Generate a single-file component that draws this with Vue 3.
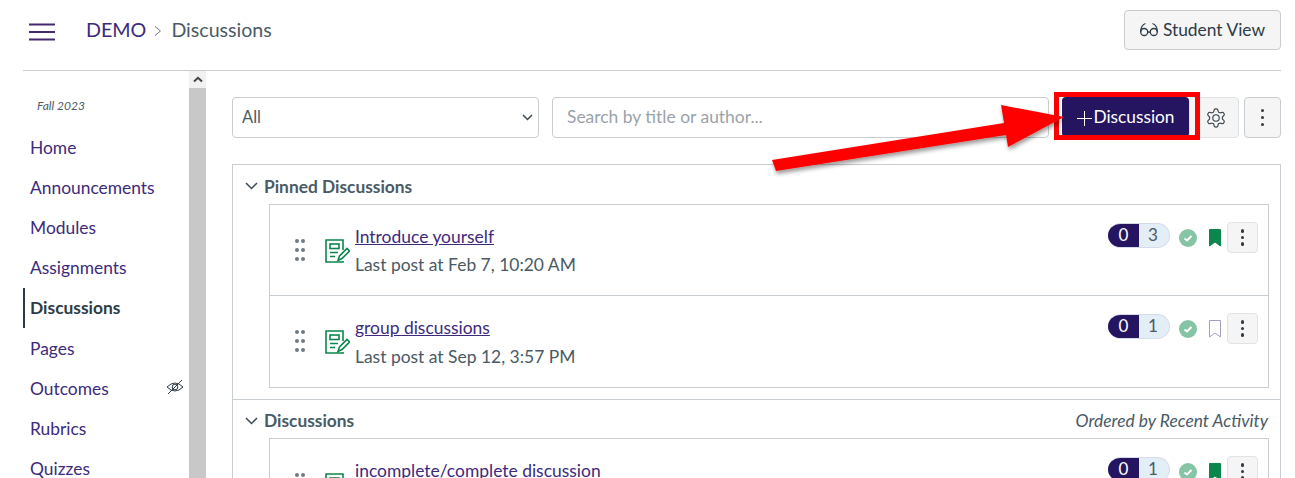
<script setup>
const nav = ['Home', 'Announcements', 'Modules', 'Assignments', 'Discussions', 'Pages', 'Outcomes', 'Rubrics', 'Quizzes']
const pinned = [
  { title: 'Introduce yourself', meta: 'Last post at Feb 7, 10:20 AM', count: 3, saved: true },
  { title: 'group discussions', meta: 'Last post at Sep 12, 3:57 PM', count: 1, saved: false }
]
</script>

<template>
  <div class="page">
    <header class="top">
      <svg class="burger" width="26" height="18" viewBox="0 0 26 18"><path d="M0 1.500h26M0 9h26M0 16.500h26" stroke="#46296f" stroke-width="2"/></svg>
      <a class="crumb">DEMO</a>
      <svg class="sep" width="8" height="12" viewBox="0 0 8 12"><path d="M1 1.500 6.500 6 1 10.500" fill="none" stroke="#6f7a82" stroke-width="1"/></svg>
      <span class="crumb-now">Discussions</span>
      <button class="btn student">
        <svg width="18" height="15" viewBox="0 0 18 15" fill="none" stroke="#2d3b45" stroke-width="1.300"><circle cx="4.200" cy="10" r="3.500"/><circle cx="13.800" cy="10" r="3.500"/><path d="M7.700 10.500q1.300-1.200 2.600 0M.7 10C.7 6 2.500 2.500 5.500 1.500M17.300 10C17.300 6 15.500 2.500 12.500 1.500"/></svg>
        <span>Student View</span>
      </button>
    </header>
    <div class="body">
      <aside class="side">
        <div class="term">Fall 2023</div>
        <ul class="nav">
          <li v-for="n in nav" :key="n" :class="{ active: n === 'Discussions' }">
            <span>{{ n }}</span>
            <svg v-if="n === 'Outcomes'" class="eye" width="18" height="16" viewBox="0 0 18 16" fill="none" stroke="#2d3b45" stroke-width="1"><path d="M1 8q8-8 16 0q-8 8-16 0Z"/><circle cx="9" cy="8" r="2.800"/><path d="M2 15 16 1"/></svg>
          </li>
        </ul>
      </aside>
      <div class="scroll">
        <div class="scroll-btn"><svg width="10" height="7" viewBox="0 0 10 7"><path d="M1 5.500 5 1.800l4 3.700" fill="none" stroke="#444" stroke-width="2"/></svg></div>
      </div>
      <main class="main">
        <div class="tools">
          <div class="select">
            <span>All</span>
            <svg width="11" height="7" viewBox="0 0 11 7"><path d="M1 1l4.500 4.500L10 1" fill="none" stroke="#3d4a53" stroke-width="1.500"/></svg>
          </div>
          <div class="search">Search by title or author...</div>
          <button class="add"><svg width="15" height="15" viewBox="0 0 15 15"><path d="M7.500 0v15M0 7.500h15" stroke="#fff" stroke-width="1"/></svg><span>Discussion</span></button>
          <button class="btn icon-btn gear">
            <svg width="22" height="22" viewBox="0 0 24 24" fill="none" stroke="#2d3b45" stroke-width="1.200"><path d="M12.220 2h-.44a2 2 0 0 0-2 2v.18a2 2 0 0 1-1 1.730l-.43.25a2 2 0 0 1-2 0l-.15-.08a2 2 0 0 0-2.730.73l-.22.38a2 2 0 0 0 .73 2.730l.15.1a2 2 0 0 1 1 1.720v.51a2 2 0 0 1-1 1.740l-.15.09a2 2 0 0 0-.73 2.730l.22.38a2 2 0 0 0 2.730.73l.15-.08a2 2 0 0 1 2 0l.43.25a2 2 0 0 1 1 1.730V20a2 2 0 0 0 2 2h.44a2 2 0 0 0 2-2v-.18a2 2 0 0 1 1-1.730l.43-.25a2 2 0 0 1 2 0l.15.08a2 2 0 0 0 2.730-.73l.22-.39a2 2 0 0 0-.73-2.730l-.15-.08a2 2 0 0 1-1-1.740v-.5a2 2 0 0 1 1-1.740l.15-.09a2 2 0 0 0 .73-2.730l-.22-.38a2 2 0 0 0-2.730-.73l-.15.08a2 2 0 0 1-2 0l-.43-.25a2 2 0 0 1-1-1.730V4a2 2 0 0 0-2-2z"/><circle cx="12" cy="12" r="3.500"/></svg>
          </button>
          <button class="btn icon-btn kebab"><i></i><i></i><i></i></button>
        </div>

        <section class="panel">
          <div class="group">
            <div class="group-head">
              <svg width="13" height="8" viewBox="0 0 13 8"><path d="M1 1l5.500 5.500L12 1" fill="none" stroke="#3d4a53" stroke-width="1.500"/></svg>
              <h2>Pinned Discussions</h2>
            </div>
            <div class="rows">
              <article v-for="d in pinned" :key="d.title" class="row">
                <div class="grip"><i v-for="k in 6" :key="k"></i></div>
                <svg class="doc" width="25" height="25" viewBox="0 0 25 25" fill="none" stroke="#0b874b" stroke-width="1.600"><path d="M18 11V1H1v22h17v-1"/><rect x="5" y="5" width="9" height="4.500"/><path d="M5 13.500h8M5 17.500h5M13 21.500l1.500-4.500 7.500-7.500 2.500 2.500-7.500 7.500Z"/></svg>
                <div class="text">
                  <a class="link">{{ d.title }}</a>
                  <p>{{ d.meta }}</p>
                </div>
                <div class="status">
                  <div class="pill"><b>0</b><span>{{ d.count }}</span></div>
                  <svg class="check" width="18" height="18" viewBox="0 0 18 18"><circle cx="9" cy="9" r="9" fill="#85c4a5"/><path d="M5.500 9.500 8 11.500l4.500-4.500" fill="none" stroke="#fff" stroke-width="2"/></svg>
                  <svg class="mark" width="12" height="18" viewBox="0 0 12 18"><path d="M.5.5h11v16.500L6 13 .5 17Z" :fill="d.saved ? '#0b874b' : 'none'" :stroke="d.saved ? '#0b874b' : '#a89fc2'"/></svg>
                  <button class="btn small"><i></i><i></i><i></i></button>
                </div>
              </article>
            </div>
          </div>
          <div class="group second">
            <div class="group-head">
              <svg width="13" height="8" viewBox="0 0 13 8"><path d="M1 1l5.500 5.500L12 1" fill="none" stroke="#3d4a53" stroke-width="1.500"/></svg>
              <h2>Discussions</h2>
              <em>Ordered by Recent Activity</em>
            </div>
            <div class="rows">
              <article class="row">
                <div class="grip"><i v-for="k in 6" :key="k"></i></div>
                <svg class="doc" width="25" height="25" viewBox="0 0 25 25" fill="none" stroke="#0b874b" stroke-width="1.600"><path d="M18 11V1H1v22h17v-1"/><rect x="5" y="5" width="9" height="4.500"/><path d="M5 13.500h8M5 17.500h5M13 21.500l1.500-4.500 7.500-7.500 2.500 2.500-7.500 7.500Z"/></svg>
                <div class="text"><a class="link">incomplete/complete discussion</a></div>
                <div class="status">
                  <div class="pill"><b>0</b><span>1</span></div>
                  <svg class="check" width="18" height="18" viewBox="0 0 18 18"><circle cx="9" cy="9" r="9" fill="#85c4a5"/><path d="M5.500 9.500 8 11.500l4.500-4.500" fill="none" stroke="#fff" stroke-width="2"/></svg>
                  <svg class="mark" width="12" height="18" viewBox="0 0 12 18"><path d="M.5.5h11v16.500L6 13 .5 17Z" fill="#0b874b" stroke="#0b874b"/></svg>
                  <button class="btn small"><i></i><i></i><i></i></button>
                </div>
              </article>
            </div>
          </div>
        </section>
      </main>
    </div>

    <div class="callout"></div>
    <svg class="arrow" width="310" height="90" viewBox="0 0 310 90">
      <defs><filter id="sh" x="-10%" y="-30%" width="120%" height="170%"><feDropShadow dx="1" dy="3" stdDeviation="2" flood-color="#000" flood-opacity=".4"/></filter></defs>
      <path d="M12 70 L244 33 L241 15 L304 27 L248 57 L246 45 L16 81Z" fill="#f00" filter="url(#sh)"/>
    </svg>
  </div>
</template>

<style>
html, body { margin: 0; background: #fff; }
</style>

<style scoped>
* { box-sizing: border-box; }
.page { position: relative; width: 1295px; height: 478px; overflow: hidden; font-family: Lato, "Open Sans", sans-serif; color: #2d3b45; background: #fff; }
.top { height: 71px; margin: 0 14px 0 23px; padding: 10px 0 20px 6px; display: flex; align-items: center; border-bottom: 1px solid #c7cdd1; }
.burger { margin-right: 31px; margin-top: 3px; }
.crumb { font-size: 19.700px; color: #3d2a7c; margin-top: -2px; }
.sep { margin: 2px 9px 0 8px; }
.crumb-now { font-size: 19.600px; color: #4a5a64; margin-top: -2px; }
.btn { background: #f5f5f5; border: 1px solid #c7cdd1; border-radius: 4px; font-family: inherit; color: #2d3b45; display: flex; align-items: center; justify-content: center; padding: 0; }
.student { margin-left: auto; width: 157px; height: 40px; gap: 5px; font-size: 17.400px; padding-bottom: 2px; }
.body { display: flex; margin-left: 23px; }
.side { width: 166px; flex: none; }
.term { margin: 27px 0 0 14px; font-size: 12px; font-style: italic; line-height: 15px; color: #4a5a64; height: 15px; }
.nav { list-style: none; margin: 14px 0 0; padding: 0; }
.nav li { height: 40.200px; padding-left: 7px; padding-right: 5px; display: flex; align-items: center; justify-content: space-between; font-size: 17.400px; color: #3d2a7c; }
.nav li.active { color: #2d3b45; font-weight: 700; border-left: 2px solid #2d3b45; padding-left: 5px; }
.eye { margin-top: -3px; }
.scroll { width: 17px; height: 407px; flex: none; background: #c8c8c8; }
.scroll-btn { height: 17px; background: #f1f1f1; display: flex; align-items: center; justify-content: center; }
.main { flex: 1; margin: 0 14px 0 26px; min-width: 0; }
.tools { display: flex; align-items: flex-start; margin-top: 26px; }
.select { width: 307px; height: 41px; border: 1px solid #c7cdd1; border-radius: 4px; display: flex; align-items: center; justify-content: space-between; padding: 0 5px 2px 9px; font-size: 16.500px; color: #4a5a64; }
.select svg { margin-top: 2px; }
.search { width: 497px; height: 41px; margin-left: 13px; border: 1px solid #c7cdd1; border-radius: 4px; padding: 0 14px; line-height: 37px; font-size: 17.450px; color: #9aa3a9; }
.add { width: 127px; height: 40px; margin-left: 13px; background: #251560; border: 0; border-radius: 4px; color: #fff; font-family: inherit; font-size: 17.300px; display: flex; align-items: center; justify-content: center; gap: 1px; padding: 0 0 2px 1px; }
.add svg { margin-top: 4px; }
.icon-btn { height: 41px; }
.gear { width: 50px; color: #2d3b45; border-color: #e0e3e5; background: #f5f5f5; padding-left: 4px; }
.kebab { width: 37px; margin-left: 5px; flex-direction: column; gap: 3.500px; }
.btn i { width: 3.500px; height: 3.500px; border-radius: 50%; background: #2d3b45; display: block; }
.panel { margin-top: 26px; border: 1px solid #c7cdd1; border-bottom: 0; height: 400px; }
.group-head { height: 39px; display: flex; align-items: center; padding: 3px 12px 0 12px; gap: 6px; }
.group-head h2 { margin: 0; font-size: 17.350px; font-weight: 700; color: #4a5a64; }
.group-head em { margin-left: auto; font-size: 17.400px; color: #4a5a64; }
.rows { margin: 0 11px 0 36px; border: 1px solid #c7cdd1; }
.row { height: 90px; display: flex; padding-left: 25px; }
.row + .row { border-top: 1px solid #c7cdd1; height: 92px; }
.row + .row p { margin-top: 5px; }
.grip { width: 11px; display: grid; grid-template-columns: 4px 4px; grid-auto-rows: 4px; gap: 5px 2px; margin-top: 34px; align-content: start; }
.grip i { width: 4px; height: 4px; border-radius: 50%; background: #6f7a82; display: block; }
.doc { margin: 34px 0 0 19px; }
.text { margin-left: 5px; padding-top: 20px; }
.link { font-size: 17.450px; color: #3d2a7c; text-decoration: underline; line-height: 24px; display: block; }
.text p { margin: 4px 0 0; font-size: 17.450px; line-height: 24px; color: #4a5a64; }
.status { margin-left: auto; padding: 17px 10px 0 0; display: flex; align-items: flex-start; }
.pill { display: flex; width: 62px; height: 25px; margin-top: 1px; border-radius: 13px; overflow: hidden; font-size: 17px; line-height: 22px; text-align: center; background: #e3eef7; border: 1px solid #d5dbe8; border-left: 0; }
.pill b { width: 31px; font-weight: 400; color: #fff; background: #251560; }
.pill span { flex: 1; color: #4a5a64; padding-right: 2px; }
.check { margin: 7px 0 0 9px; }
.mark { margin: 7px 0 0 12px; }
.small { width: 31px; height: 31px; margin-left: 6px; flex-direction: column; gap: 3px; border-color: #e0e3e5; }
.group.second { border-top: 1px solid #c7cdd1; margin-top: 11px; }
.group.second .group-head { height: 38px; }
.callout { position: absolute; left: 1054px; top: 92px; width: 146px; height: 48px; border: 5px solid #f00; }
.arrow { position: absolute; left: 760px; top: 90px; }
</style>
